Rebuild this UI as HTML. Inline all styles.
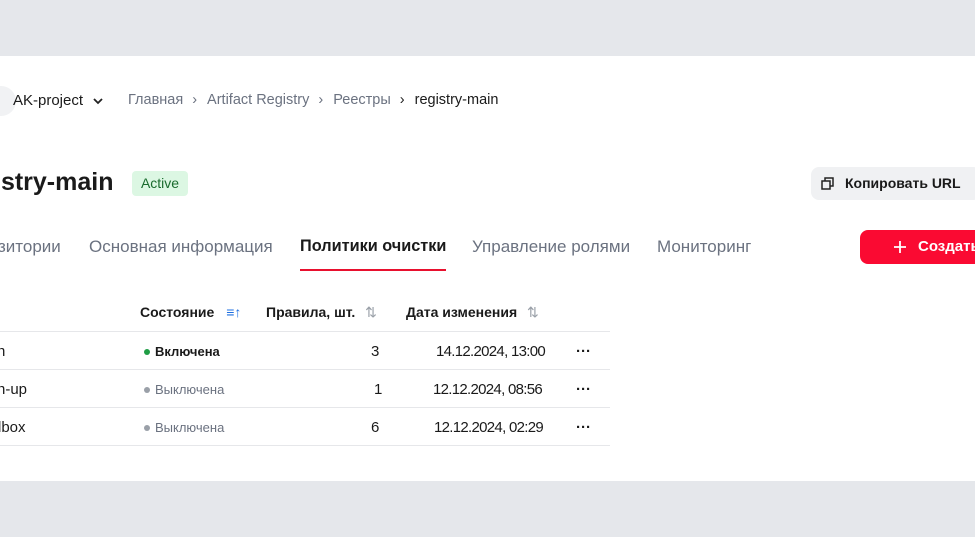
<!DOCTYPE html>
<html><head><meta charset="utf-8"><style>
*{margin:0;padding:0;box-sizing:border-box}
body{width:975px;height:537px;background:#e5e7eb;font-family:"Liberation Sans",sans-serif;position:relative;overflow:hidden;color:#1a1a1a}
.w{position:absolute;left:0;top:56px;width:975px;height:425px;background:#fff}
.a{position:absolute;white-space:nowrap}
.g{color:#6b7280}
.row{position:absolute;left:0;width:610px;height:1px;background:#e6e7ea}
.dot{display:inline-block;width:6px;height:6px;border-radius:50%;margin-right:5px;vertical-align:1px}
.sep{margin:0 10px 0 9px}
.d{font-size:15px;letter-spacing:-0.7px}
</style></head><body>
<div class="w"></div>
<div class="a" style="left:-14px;top:86px;width:30px;height:30px;border-radius:50%;background:#f1f2f4"></div>
<div class="a" style="left:13px;top:92px;font-size:15px">AK-project</div>
<svg class="a" style="left:92px;top:96px" width="12" height="10"><path d="M2 3l4 4 4-4" stroke="#222" stroke-width="1.8" fill="none"/></svg>
<div class="a g" style="left:128px;top:92px;font-size:14.5px">Главная<span class="sep">›</span>Artifact Registry<span class="sep">›</span>Реестры<span class="sep" style="color:#222">›</span><span style="color:#1a1a1a">registry-main</span></div>
<div class="a" style="left:-6px;top:168px;font-size:25px;font-weight:bold">istry-main</div>
<div class="a" style="left:132px;top:171px;width:56px;height:25px;background:#dcf7e3;border-radius:4px;color:#1a6b2e;font-size:14px;line-height:25px;text-align:center">Active</div>
<div class="a" style="left:811px;top:167px;width:170px;height:33px;background:#f0f1f3;border-radius:8px"></div>
<svg class="a" style="left:821px;top:177px" width="13" height="13"><rect x="1" y="4" width="8" height="8" fill="none" stroke="#222" stroke-width="1.5"/><path d="M4 4V1h8v8H9" fill="none" stroke="#222" stroke-width="1.5"/></svg>
<div class="a" style="left:845px;top:175px;font-size:14px;font-weight:bold">Копировать URL</div>
<div class="a g" style="left:-2px;top:237px;font-size:17px">зитории</div>
<div class="a g" style="left:89px;top:237px;font-size:17px">Основная информация</div>
<div class="a" style="left:300px;top:237px;font-size:16.3px;font-weight:bold">Политики очистки</div>
<div class="a" style="left:300px;top:269px;width:146px;height:2px;background:#e8102e"></div>
<div class="a g" style="left:472px;top:237px;font-size:17px">Управление ролями</div>
<div class="a g" style="left:657px;top:237px;font-size:17px">Мониторинг</div>
<div class="a" style="left:860px;top:230px;width:130px;height:34px;background:#fa0a32;border-radius:8px"></div>
<div class="a" style="left:918px;top:238px;color:#fff;font-size:15px;font-weight:bold">Создать</div>
<svg class="a" style="left:893px;top:240px" width="14" height="14"><path d="M7 1v12M1 7h12" stroke="#fff" stroke-width="1.8"/></svg>
<div class="a" style="left:140px;top:304px;font-size:14px;font-weight:bold">Состояние <span style="color:#1e6fe0;margin-left:8px">≡↑</span></div>
<div class="a" style="left:266px;top:304px;font-size:14px;font-weight:bold">Правила, шт. <span style="color:#9aa0a8;margin-left:6px;font-weight:normal">⇅</span></div>
<div class="a" style="left:406px;top:304px;font-size:14px;font-weight:bold">Дата изменения <span style="color:#9aa0a8;margin-left:6px;font-weight:normal">⇅</span></div>
<div class="row" style="top:331px"></div><div class="row" style="top:369px"></div><div class="row" style="top:407px"></div><div class="row" style="top:445px"></div>
<div class="a" style="left:-3px;top:343px;font-size:15px">n</div>
<div class="a" style="left:-3px;top:381px;font-size:15px">n-up</div>
<div class="a" style="left:-2px;top:419px;font-size:15px">lbox</div>
<div class="a" style="left:144px;top:344px;font-size:13px;font-weight:bold"><span class="dot" style="background:#1f9d45"></span>Включена</div>
<div class="a" style="left:144px;top:382px;font-size:13px;color:#6b7280"><span class="dot" style="background:#9aa0a8"></span>Выключена</div>
<div class="a" style="left:144px;top:420px;font-size:13px;color:#6b7280"><span class="dot" style="background:#9aa0a8"></span>Выключена</div>
<div class="a" style="left:371px;top:343px;font-size:15px">3</div>
<div class="a" style="left:374px;top:381px;font-size:15px">1</div>
<div class="a" style="left:371px;top:419px;font-size:15px">6</div>
<div class="a d" style="left:436px;top:343px">14.12.2024, 13:00</div>
<div class="a d" style="left:433px;top:381px">12.12.2024, 08:56</div>
<div class="a d" style="left:434px;top:419px">12.12.2024, 02:29</div>
<div class="a" style="left:576px;top:343px;font-size:15px;font-weight:bold">···</div>
<div class="a" style="left:576px;top:381px;font-size:15px;font-weight:bold">···</div>
<div class="a" style="left:576px;top:419px;font-size:15px;font-weight:bold">···</div>
</body></html>
